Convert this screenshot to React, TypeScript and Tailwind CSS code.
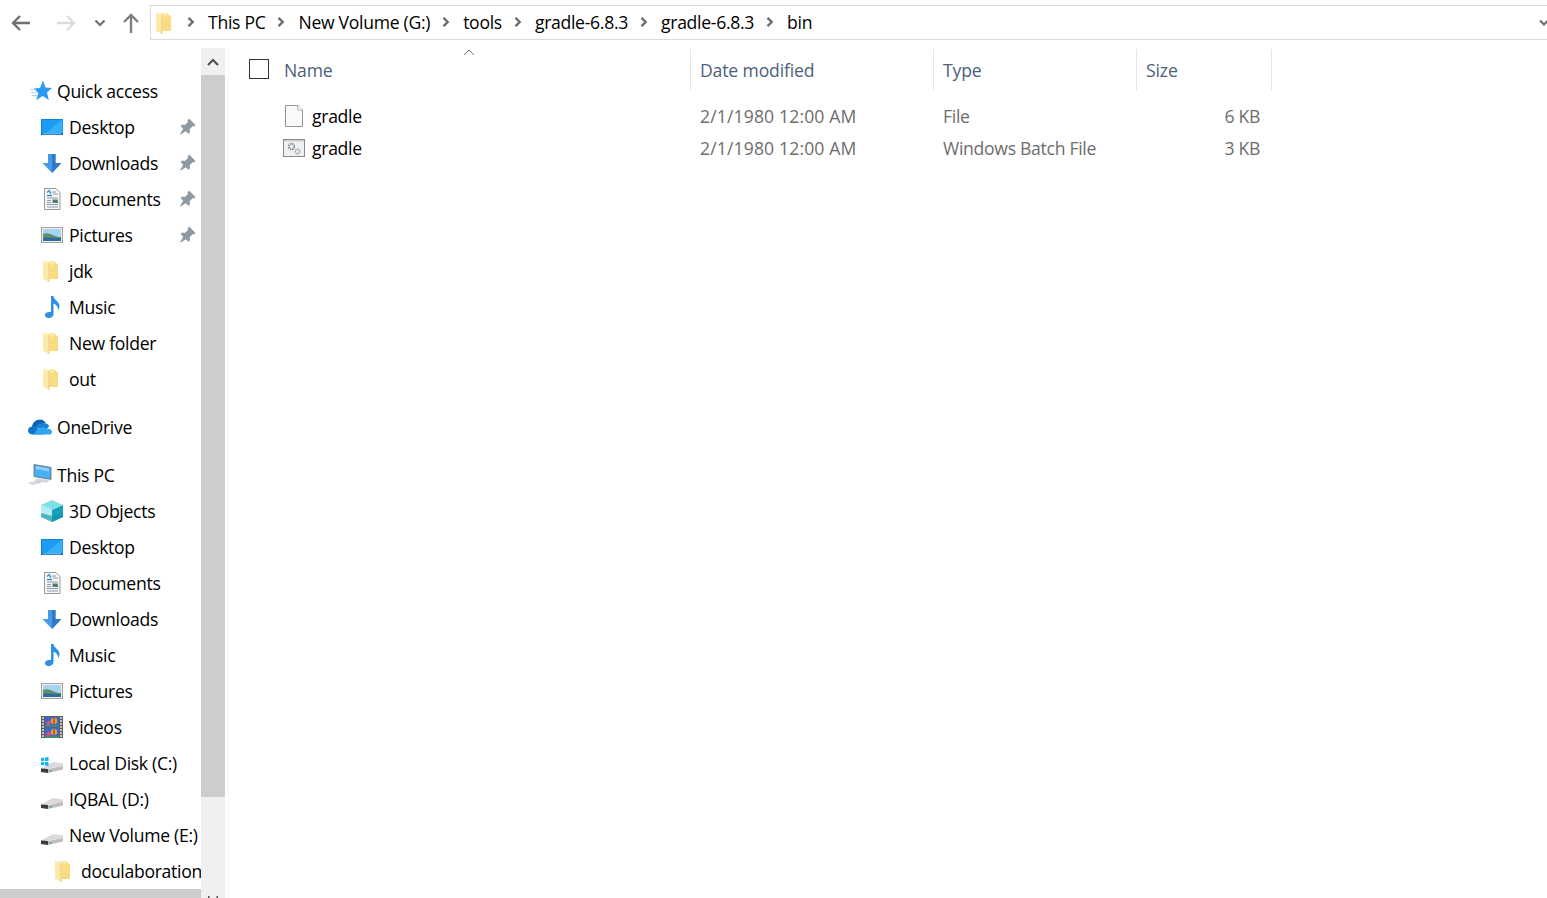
const font = "font-['Open_Sans','Noto_Sans',sans-serif]";

function FolderIcon() {
  return (
    <svg width="24" height="24" viewBox="0 0 24 24">
      <path d="M3.500 2h10.500l4 4v14H3.500z" fill="#f8d976" />
      <path d="M3.500 2h6.500l4 0v18H9v3l-5.500-3z" fill="#fce9a8" />
      <path d="M10 6c2 0 3-.5 4-.5h4V20h-8z" fill="#f9dc82" />
      <path d="M9 4v19" stroke="#e3bf60" strokeWidth="0.8" />
      <path d="M3.500 2h5.500v2l-5.500 0z" fill="#fdf0c0" />
    </svg>
  );
}

function DesktopIcon() {
  return (
    <svg width="24" height="24" viewBox="0 0 24 24">
      <rect x="1" y="4" width="22" height="16" fill="#1e9cf4" />
      <path d="M1 4h22v1H2v14H1z" fill="#0f7fd0" />
      <path d="M6 18l11-9 5-4v13z" fill="#35b0fb" />
      <rect x="1" y="18" width="22" height="2" fill="#0c75c5" />
      <rect x="3" y="18.400" width="18" height="0.800" fill="#9fd6fb" />
    </svg>
  );
}

function DownloadIcon() {
  return (
    <svg width="24" height="24" viewBox="0 0 24 24">
      <path d="M8 3h7.500v9h6L12 22 2.500 12H8z" fill="#4a9be6" />
      <path d="M12 3h3.500v9h6L12 22z" fill="#2f7acb" />
    </svg>
  );
}

function DocumentIcon() {
  return (
    <svg width="24" height="24" viewBox="0 0 24 24">
      <path d="M4.500 1.500h11.500l4 4v17h-15.500z" fill="#f7f7f7" stroke="#9a9a9a" />
      <path d="M7 5.500l2-2 2 3M7 8.500h5" stroke="#2d8fe0" strokeWidth="1.400" fill="none" />
      <path d="M12 5h4M13 7h5M7 11h11M7 17.500h11M7 20h11" stroke="#8f9aa6" />
      <rect x="12.500" y="12.500" width="5.500" height="3.500" fill="#4f8273" />
      <path d="M7 13.500h4M7 15.500h4" stroke="#8f9aa6" />
    </svg>
  );
}

function PictureIcon() {
  return (
    <svg width="24" height="24" viewBox="0 0 24 24">
      <rect x="1.500" y="4.500" width="21" height="15" fill="#efefef" stroke="#a3a3a3" />
      <rect x="3" y="6" width="18" height="12" fill="#a9d4ef" />
      <path d="M3 11c4-2 8 0 11 1.500s5 1.500 7 1.500v4H3z" fill="#5d8f6c" />
      <path d="M3 15c5-1 11 0 18 0v3H3z" fill="#2f6a9b" />
    </svg>
  );
}

function MusicIcon() {
  return (
    <svg width="24" height="24" viewBox="0 0 24 24">
      <path d="M11 1h2.500c0 4 6 5 6 10 0 1.500-.5 3-1.500 4 .5-3-2-5.500-4.500-6.500V19c0 2.500-2.500 4-5 4-2 0-3.500-1-3.500-2.800C4.500 18 7.500 16.500 11 17z" fill="#2f8fe6" />
    </svg>
  );
}

function VideoIcon() {
  return (
    <svg width="24" height="24" viewBox="0 0 24 24">
      <rect x="1" y="1" width="22" height="22" fill="#5d5d5d" />
      <rect x="5" y="2" width="14" height="9.500" fill="#3f63d6" />
      <rect x="5" y="12.500" width="14" height="9.500" fill="#3f63d6" />
      <circle cx="14" cy="6" r="3.200" fill="#e8a12c" />
      <circle cx="14" cy="17" r="3.200" fill="#e8a12c" />
      <path d="M14 3v6M14 14v6" stroke="#7a2d2d" />
      <circle cx="8.500" cy="8" r="2.200" fill="#d8547a" />
      <circle cx="8.500" cy="19" r="2.200" fill="#d8547a" />
      <path d="M5 11l14 0M5 22h14" stroke="#3fae5a" />
      <path d="M2 3h2M2 6h2M2 9h2M2 12h2M2 15h2M2 18h2M2 21h2M20 3h2M20 6h2M20 9h2M20 12h2M20 15h2M20 18h2M20 21h2" stroke="#e6e6e6" strokeWidth="1.300" />
    </svg>
  );
}

function DriveIcon({ windows }: { windows?: boolean }) {
  return (
    <svg width="24" height="24" viewBox="0 0 24 24">
      <path d="M1 17.500L13 11l10 1.500v2.500L2 18.500z" fill="#d9d9d9" />
      <path d="M8 18l15-3v3.500L8 22z" fill="#bdbdbd" />
      <path d="M1 17.500L8 18v4l-7-1z" fill="#3c3c3c" />
      <rect x="9.500" y="19" width="2" height="1.500" fill="#4caf50" />
      {windows && <path d="M1 7l3.200-.4v3.400H1zM5 6.500l3.500-.5v4H5zM1 11h3.200v3.400L1 14zM5 11h3.500v4L5 14.500z" fill="#12b4f2" />}
    </svg>
  );
}

function StarIcon() {
  return (
    <svg width="24" height="24" viewBox="0 0 24 24">
      <path d="M15 1.500l2.500 7 6.500.5-5 4.500 1.800 7.500-6-4-6.500 4 2-7L5.500 9.500l6.500-.5z" fill="#2b9cf0" />
      <path d="M2 10.500h6M3 13.500h5M4 16.500h5" stroke="#a9d7f6" />
    </svg>
  );
}

function OneDriveIcon() {
  return (
    <svg width="25" height="18" viewBox="1 4 24 17">
      <path d="M5 13c0-5 4-8 8-8 3 0 5 2 6 4-5 0-8 2-9 5z" fill="#0f63b5" />
      <path d="M9 12c2-3 6-4 10-3 2 .5 3 2 3 3l-5 5z" fill="#1684d8" />
      <path d="M6 20c-3 0-5-1.500-5-4s2-4 5-4c1 0 3 .5 4 1l7 7z" fill="#1273c7" />
      <path d="M8 20c0-4 3-7 7-7 2 0 3 .5 4 1 3-.5 6 1 6 3.500 0 1.500-1 2.500-2 2.500z" fill="#2ea7ef" />
    </svg>
  );
}

function PcIcon() {
  return (
    <svg width="24" height="24" viewBox="0 0 24 24">
      <path d="M6 1.500l17 3v12l-17-3z" fill="#49b0f5" stroke="#5f6b75" strokeWidth="0.800" />
      <path d="M8 3l13 2.500v3L8 6z" fill="#8fd0fa" />
      <path d="M8 15.500l14 1.500-3 2.500-13-1z" fill="#d4d8dc" />
      <path d="M0 19.500l10-1.500 4 1.500-10 2.500z" fill="#c5cbd0" />
      <path d="M1 20l8-1.300M2 21l8-1.300" stroke="#eef0f2" strokeWidth="0.500" />
    </svg>
  );
}

function CubeIcon() {
  return (
    <svg width="24" height="24" viewBox="0 0 24 24">
      <path d="M12 1l11 5-11 5L1 6z" fill="#7fe0e6" />
      <path d="M1 6l11 5v12L1 18z" fill="#b5ecef" />
      <path d="M23 6v12l-11 5V11z" fill="#1aa0b8" />
      <path d="M1 14l11 3v6L1 18zM23 14v4l-11 5v-6z" fill="#0e8ea6" opacity="0.600" />
    </svg>
  );
}

function PinIcon() {
  return (
    <svg width="17" height="17" viewBox="0 0 16 16">
      <path d="M9.500 .500L15.500 6.500 14 8l-1-.5-3 3 .5 2.500L9 15 6.500 12.500 1.500 15.500 1 15l3-5L1.500 7.500 3 6l2.500.5 3-3-.5-1z" fill="#8e9aa3" />
    </svg>
  );
}

function Chevron() {
  return (
    <svg width="8" height="10" viewBox="0 0 8 10" className="shrink-0">
      <path d="M1.500 .800l4.200 4.200-4.200 4.200" fill="none" stroke="#6f6f6f" strokeWidth="2.400" />
    </svg>
  );
}

type NavItem = {
  label: string;
  icon: React.ReactNode;
  pinned?: boolean;
  level?: number;
  gap?: string;
};

const navItems: NavItem[] = [
  { label: "Quick access", icon: <StarIcon />, level: 0 },
  { label: "Desktop", icon: <DesktopIcon />, pinned: true },
  { label: "Downloads", icon: <DownloadIcon />, pinned: true },
  { label: "Documents", icon: <DocumentIcon />, pinned: true },
  { label: "Pictures", icon: <PictureIcon />, pinned: true },
  { label: "jdk", icon: <FolderIcon /> },
  { label: "Music", icon: <MusicIcon /> },
  { label: "New folder", icon: <FolderIcon /> },
  { label: "out", icon: <FolderIcon /> },
  { label: "OneDrive", icon: <OneDriveIcon />, level: 0, gap: "mt-3" },
  { label: "This PC", icon: <PcIcon />, level: 0, gap: "mt-3" },
  { label: "3D Objects", icon: <CubeIcon /> },
  { label: "Desktop", icon: <DesktopIcon /> },
  { label: "Documents", icon: <DocumentIcon /> },
  { label: "Downloads", icon: <DownloadIcon /> },
  { label: "Music", icon: <MusicIcon /> },
  { label: "Pictures", icon: <PictureIcon /> },
  { label: "Videos", icon: <VideoIcon /> },
  { label: "Local Disk (C:)", icon: <DriveIcon windows /> },
  { label: "IQBAL (D:)", icon: <DriveIcon /> },
  { label: "New Volume (E:)", icon: <DriveIcon /> },
  { label: "doculaboration", icon: <FolderIcon />, level: 2 },
];

function NavRow({ item }: { item: NavItem }) {
  const level = item.level ?? 1;
  const indent = level === 0 ? "pl-[28px]" : level === 2 ? "pl-[52px]" : "pl-[40px]";
  return (
    <div className={`relative flex h-9 shrink-0 items-center gap-[5px] whitespace-nowrap ${indent} ${item.gap ?? ""}`}>
      <span className="flex w-6 shrink-0 items-center justify-center">{item.icon}</span>
      <span className="pt-px text-[17.6px] tracking-[-0.3px] text-black">{item.label}</span>
      {item.pinned && (
        <span className="absolute left-[179px] top-[9px]">
          <PinIcon />
        </span>
      )}
    </div>
  );
}

function Sidebar() {
  return (
    <div className="flex h-full w-[229px] shrink-0 border-r border-[#f5f5f5]">
      <div className="flex w-[201px] shrink-0 flex-col overflow-hidden">
        <div className="flex min-h-0 flex-1 flex-col overflow-hidden pt-[25px]">
          {navItems.map((item, i) => (
            <NavRow key={i} item={item} />
          ))}
        </div>
        <div className="h-[9px] shrink-0 bg-[#cdcdcd]" />
      </div>
      <div className="flex w-6 shrink-0 flex-col bg-[#f0f0f0]">
        <div className="flex h-[27px] shrink-0 items-center justify-center">
          <svg width="12" height="8" viewBox="0 0 12 8">
            <path d="M1 7l5-5 5 5" fill="none" stroke="#505050" strokeWidth="2.200" />
          </svg>
        </div>
        <div className="h-[722px] shrink-0 bg-[#cdcdcd]" />
        <div className="flex flex-1 items-end justify-center">
          <svg width="12" height="2" viewBox="0 0 12 2">
            <path d="M1 0h1.500v2H1zM9.500 0H11v2H9.500z" fill="#505050" />
          </svg>
        </div>
      </div>
    </div>
  );
}

const columns = [
  { label: "Name", cls: "w-[462px] pl-[55px]" },
  { label: "Date modified", cls: "w-[243px] pl-[9px]" },
  { label: "Type", cls: "w-[203px] pl-[9px]" },
  { label: "Size", cls: "w-[135px] pl-[9px]" },
];

const files = [
  { name: "gradle", date: "2/1/1980 12:00 AM", type: "File", size: "6 KB", batch: false },
  { name: "gradle", date: "2/1/1980 12:00 AM", type: "Windows Batch File", size: "3 KB", batch: true },
];

function FileIcon({ batch }: { batch: boolean }) {
  if (batch) {
    return (
      <svg width="24" height="24" viewBox="0 0 24 24" className="-translate-x-px">
        <rect x="1.500" y="3.500" width="21" height="17" fill="#f0f0f0" stroke="#8a8a8a" />
        <path d="M2 4h20v1.500H2z" fill="#d0d0d0" />
        <circle cx="9.500" cy="10.500" r="2.800" fill="none" stroke="#8d959c" strokeWidth="2" strokeDasharray="1.500 0.700" />
        <circle cx="15.500" cy="15.500" r="2.200" fill="none" stroke="#9aa2a8" strokeWidth="1.600" strokeDasharray="1.200 0.600" />
      </svg>
    );
  }
  return (
    <svg width="24" height="24" viewBox="0 0 24 24" className="-translate-x-px">
      <path d="M3.500 1.500h12.500l4.500 4.500v16.500h-17z" fill="#f8f9fa" stroke="#949494" />
      <path d="M16 1.500v4.500h4.500" fill="#fff" stroke="#b0b0b0" />
    </svg>
  );
}

function FileTable() {
  return (
    <div className="relative min-w-0 flex-1 pt-px">
      <svg width="12" height="7" viewBox="0 0 12 7" className="absolute left-[234px] top-[1px]">
        <path d="M1 6l5-5 5 5" fill="none" stroke="#7a7a7a" />
      </svg>
      <div className="flex h-[41px] items-center">
        {columns.map((c) => (
          <div key={c.label} className={`relative flex h-full items-center border-r border-[#e5e5e5] pt-px text-[17.6px] tracking-[-0.15px] text-[#4c607a] ${c.cls}`}>
            {c.label === "Name" && (
              <span className="absolute left-[20px] top-[10px] h-5 w-5 border border-[#333] bg-white" />
            )}
            {c.label}
          </div>
        ))}
      </div>
      <div className="mt-[10px] flex flex-col">
        {files.map((f, i) => (
          <div key={i} className="flex h-8 items-center pt-px text-[17.6px] tracking-[-0.3px] text-[#6d6d6d]">
            <div className="flex w-[462px] items-center gap-[5px] pl-[54px]">
              <FileIcon batch={f.batch} />
              <span className="text-black">{f.name}</span>
            </div>
            <div className="w-[243px] pl-[9px] tracking-[0.13px]">{f.date}</div>
            <div className="w-[203px] pl-[9px]">{f.type}</div>
            <div className="w-[135px] pr-[12px] text-right">{f.size}</div>
          </div>
        ))}
      </div>
    </div>
  );
}

const crumbs = ["This PC", "New Volume (G:)", "tools", "gradle-6.8.3", "gradle-6.8.3", "bin"];

function TopBar() {
  return (
    <div className="flex h-[48px] shrink-0 items-start overflow-hidden">
      <div className="flex h-[46px] w-[150px] shrink-0 items-center">
        <svg width="22" height="20" viewBox="0 0 22 20" className="ml-[10px]">
          <path d="M20 10H3M10 3l-7 7 7 7" fill="none" stroke="#6f6f6f" strokeWidth="2.400" />
        </svg>
        <svg width="22" height="20" viewBox="0 0 22 20" className="ml-[24px]">
          <path d="M1 10h17M11 3l7 7-7 7" fill="none" stroke="#dcdcdc" strokeWidth="2.400" />
        </svg>
        <svg width="12" height="8" viewBox="0 0 12 8" className="ml-[16px]">
          <path d="M1.500 1.500L6 6l4.500-4.500" fill="none" stroke="#707070" strokeWidth="2.200" />
        </svg>
        <svg width="20" height="22" viewBox="0 0 20 22" className="ml-[15px]">
          <path d="M10 21V3M3 10l7-7 7 7" fill="none" stroke="#808080" strokeWidth="2.400" />
        </svg>
      </div>
      <div className="mt-[5px] flex h-[35px] w-[1410px] shrink-0 items-center border border-[#d9d9d9] pl-[2px] text-[17.6px] tracking-[-0.3px] text-black">
        <FolderIcon />
        <div className="ml-[10px] flex items-center">
          {crumbs.map((c, i) => (
            <div key={i} className="flex items-center">
              <Chevron />
              <span className="ml-[13px] mr-[12px] whitespace-nowrap">{c}</span>
            </div>
          ))}
        </div>
        <svg width="10" height="8" viewBox="0 0 10 8" className="ml-auto mr-[10px]">
          <path d="M1 1.500L5 5.500l4-4" fill="none" stroke="#6f6f6f" strokeWidth="2.200" />
        </svg>
      </div>
    </div>
  );
}

export default function App() {
  return (
    <div className={`flex h-[898px] w-[1547px] flex-col overflow-hidden bg-white ${font}`}>
      <TopBar />
      <div className="flex min-h-0 flex-1">
        <Sidebar />
        <FileTable />
      </div>
    </div>
  );
}
